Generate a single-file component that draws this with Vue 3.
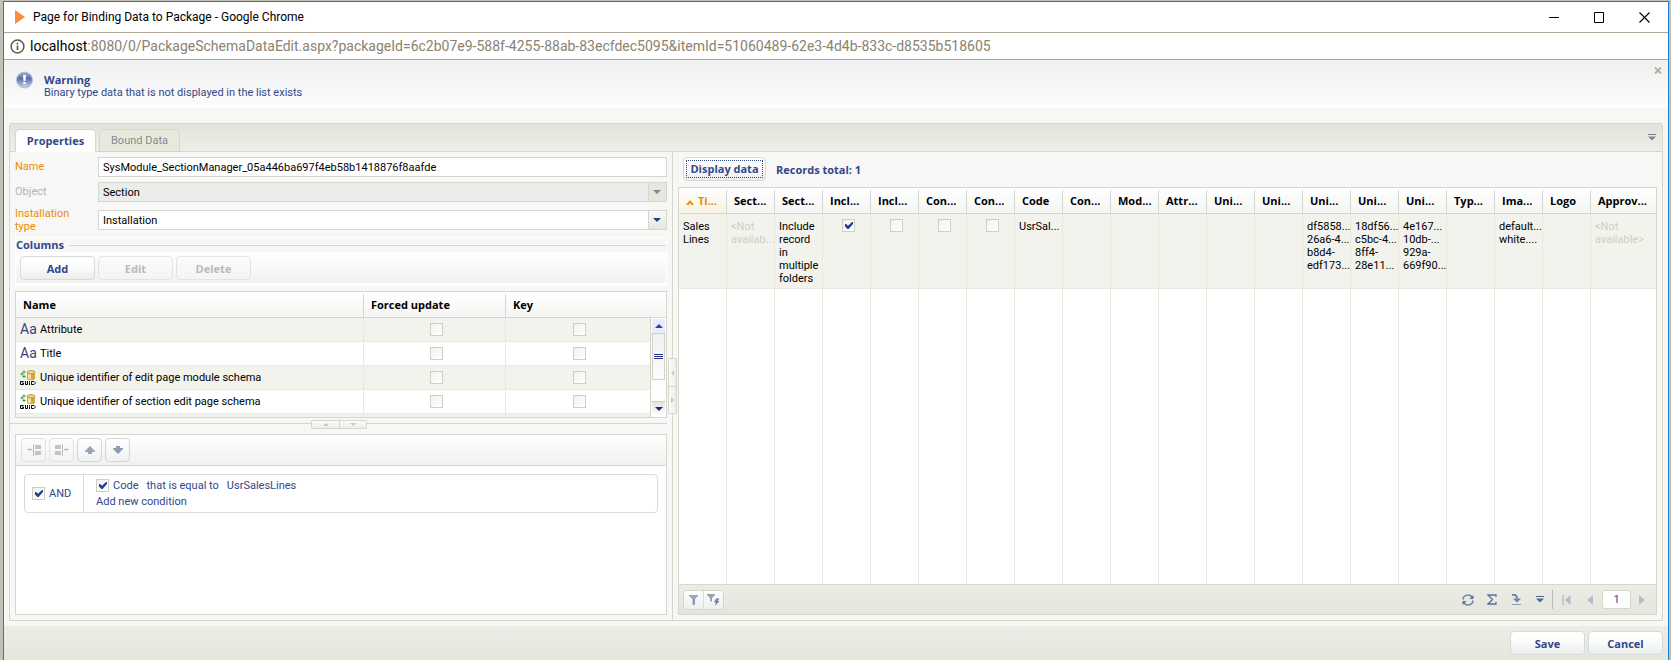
<template>
  <div class="desktop">
    <div class="window">
      <header class="title-bar">
        <svg class="app-icon" width="10" height="14" viewBox="0 0 10 14"><path d="M0 0L10 7L0 14Z" fill="#f98f3e" /></svg>
        <h1 class="window-title">Page for Binding Data to Package - Google Chrome</h1>
        <div class="window-buttons">
          <button type="button" aria-label="Minimize"><svg width="11" height="11" viewBox="0 0 11 11"><path d="M0 5.5H10" stroke="#000" /></svg></button>
          <button type="button" aria-label="Maximize"><svg width="11" height="11" viewBox="0 0 11 11"><path d="M.5 .5H9.5V10.5H.5Z" fill="none" stroke="#000" /></svg></button>
          <button type="button" aria-label="Close"><svg width="11" height="11" viewBox="0 0 11 11"><path d="M.5 .5L10.5 10.5M10.5 .5L.5 10.5" stroke="#000" stroke-width="1.1" /></svg></button>
        </div>
      </header>

      <div class="url-bar">
        <svg width="15" height="15" viewBox="0 0 15 15">
          <circle cx="7.5" cy="7.5" r="6.4" fill="none" stroke="#5b574c" stroke-width="1.5" />
          <path d="M7.5 6.5V11" stroke="#5b574c" stroke-width="1.7" />
          <circle cx="7.5" cy="4.5" r="1" fill="#5b574c" />
        </svg>
        <span class="url"><b>localhost</b>:8080/0/PackageSchemaDataEdit.aspx?packageId=6c2b07e9-588f-4255-88ab-83ecfdec5095&amp;itemId=51060489-62e3-4d4b-833c-d8535b518605</span>
      </div>

      <section class="warning">
        <svg width="17" height="18" viewBox="0 0 17 18">
          <defs>
            <linearGradient id="ball" x1="0" y1="0" x2="0" y2="1">
              <stop offset="0" stop-color="#9fb0d6" />
              <stop offset=".4" stop-color="#5b70aa" />
              <stop offset="1" stop-color="#cdd7ec" />
            </linearGradient>
          </defs>
          <circle cx="8.5" cy="9" r="8" fill="url(#ball)" stroke="#b9c3dc" />
          <path d="M7 4H10L9.4 10H7.6Z" fill="#fff" />
          <rect x="7.3" y="11" width="2.4" height="2.2" fill="#fff" />
        </svg>
        <div class="warning-text">
          <strong>Warning</strong>
          <p>Binary type data that is not displayed in the list exists</p>
        </div>
        <button type="button" class="warning-close" aria-label="Close warning">
          <svg width="8" height="7" viewBox="0 0 8 7"><path d="M1 .5L7 6.5M7 .5L1 6.5" stroke="#b5ad95" stroke-width="1.8" /></svg>
        </button>
      </section>

      <main class="tab-panel">
        <nav class="tabs">
          <button type="button" class="tab active">Properties</button>
          <button type="button" class="tab">Bound Data</button>
          <button type="button" class="tabs-menu" aria-label="Tabs">
            <svg width="8" height="7" viewBox="0 0 8 7"><path d="M0 .5H8" stroke="#7d838f" /><path d="M0 2.5H8L4 6.5Z" fill="#7d838f" /></svg>
          </button>
        </nav>

        <div class="panes">
          <div class="left-pane">
            <form class="props" @submit.prevent>
              <label for="name">Name</label>
              <input id="name" class="field" type="text" v-model="name">
              <label for="object" class="muted">Object</label>
              <div class="select-wrap disabled">
                <select id="object" class="field" disabled><option>Section</option></select>
                <span class="arrow"></span>
              </div>
              <label for="install" class="two-line">Installation type</label>
              <div class="select-wrap last">
                <select id="install" class="field"><option>Installation</option></select>
                <span class="arrow"></span>
              </div>
            </form>

            <section class="columns-group">
              <h2 class="group-title">Columns</h2>
              <div class="group-buttons">
                <button type="button" class="btn">Add</button>
                <button type="button" class="btn" disabled>Edit</button>
                <button type="button" class="btn" disabled>Delete</button>
              </div>
            </section>

            <div class="column-list">
              <table class="grid">
                <colgroup><col><col class="col-forced"><col class="col-key"></colgroup>
                <thead>
                  <tr><th>Name</th><th>Forced update</th><th>Key</th></tr>
                </thead>
                <tbody>
                  <tr v-for="c in columns" :key="c.name">
                    <td>
                      <div class="col-name">
                        <span v-if="c.type === 'text'" class="aa">Aa</span>
                        <svg v-else width="16" height="16" viewBox="0 0 16 16">
                          <path d="M2.500 2h3M4 .5v3M.5 4h3M2 2.500v3M2.500 6.500h3M4 5v3" stroke="#3f9a30" />
                          <path d="M7 2V8.500C7 10.700 15 10.700 15 8.500V2Z" fill="#cfa545" />
                          <path d="M8 3V8.800L11 9.600V3Z" fill="#f3e09a" />
                          <ellipse cx="11" cy="2.200" rx="4" ry="1.700" fill="#ecd488" stroke="#a98532" stroke-width=".7" />
                          <path d="M3.500 11.500H.5V14.500H3.500V13H2M5.500 11V14.500H7.500V11M9.500 11V12M9.500 12.500V15M11.500 11.500V14.500H14L15 13.500V12.500L14 11.500Z" fill="none" stroke="#000" />
                        </svg>
                        <span>{{ c.name }}</span>
                      </div>
                    </td>
                    <td class="check"><input type="checkbox" :aria-label="c.name + ' forced update'"></td>
                    <td class="check key"><input type="checkbox" :aria-label="c.name + ' key'"></td>
                  </tr>
                  <tr><td></td><td></td><td></td></tr>
                </tbody>
              </table>
              <div class="scrollbar">
                <button type="button" class="up" aria-label="Scroll up"></button>
                <div class="thumb"></div>
                <button type="button" class="down" aria-label="Scroll down"></button>
              </div>
            </div>

            <div class="h-splitter"><span class="h-handle"><i class="tri-up"></i><i class="tri-down"></i></span></div>

            <div class="filter-box">
              <div class="filter-tools">
                <button type="button" class="tool" disabled aria-label="Group">
                  <svg width="16" height="14" viewBox="0 0 16 14"><path d="M1 6.500H6M8.500 1.500H7.500V12.500H8.500" fill="none" stroke="#bcbcbc" /><path d="M3.500 4.500L6 6.500L3.500 8.500ZM9 2h6v4h-6zM9 8h6v4h-6z" fill="#c3c3c3" /></svg>
                </button>
                <button type="button" class="tool" disabled aria-label="Ungroup">
                  <svg width="16" height="14" viewBox="0 0 16 14"><path d="M15 6.500H10M7.500 1.500H8.500V12.500H7.500" fill="none" stroke="#bcbcbc" /><path d="M12.500 4.500L10 6.500L12.500 8.500ZM1 2h6v4h-6zM1 8h6v4h-6z" fill="#c3c3c3" /></svg>
                </button>
                <button type="button" class="tool" aria-label="Move up">
                  <svg width="10" height="8" viewBox="0 0 10 8"><path d="M5 0L10 5V6H7V8H3V6H0V5Z" fill="#9aa2b4" /></svg>
                </button>
                <button type="button" class="tool" aria-label="Move down">
                  <svg width="10" height="8" viewBox="0 0 10 8"><path d="M5 8L10 3V2H7V0H3V2H0V3Z" fill="#9099b0" /></svg>
                </button>
              </div>
              <div class="condition-group">
                <label class="and"><input type="checkbox" v-model="groupOn">AND</label>
                <div class="conditions">
                  <div class="condition">
                    <label><input type="checkbox" v-model="conditionOn">Code</label>
                    <a href="#">that is equal to</a>
                    <a href="#">UsrSalesLines</a>
                  </div>
                  <a href="#">Add new condition</a>
                </div>
              </div>
            </div>

            <span class="v-handle"><i class="tri-left"></i><i class="tri-right"></i></span>
          </div>

          <div class="right-pane">
            <div class="data-head">
              <button type="button" class="btn display"><span>Display data</span></button>
              <strong>Records total: 1</strong>
            </div>
            <div class="data-box">
              <table class="grid data">
                <colgroup><col v-for="n in 19" :key="n" class="col-data"><col></colgroup>
                <thead>
                  <tr>
                    <th v-for="(h, i) in headers" :key="i" :class="{ sorted: i === 0 }">
                      <svg v-if="i === 0" width="8" height="5" viewBox="0 0 8 5"><path d="M0 5L4 0L8 5H5.500L4 3L2.500 5Z" fill="#f08a00" /></svg>{{ h }}
                    </th>
                  </tr>
                </thead>
                <tbody>
                  <tr class="record">
                    <td v-for="(cell, i) in record" :key="i" :class="{ check: typeof cell === 'boolean', na: cell[0] === '<Not' }">
                      <input v-if="typeof cell === 'boolean'" type="checkbox" :checked="cell" :aria-label="headers[i]">
                      <template v-else>
                        <div v-for="line in cell" :key="line">{{ line }}</div>
                      </template>
                    </td>
                  </tr>
                  <tr class="filler"><td v-for="n in 20" :key="n"></td></tr>
                </tbody>
              </table>
              <div class="pager">
                <div class="filter-buttons">
                  <button type="button" aria-label="Filter">
                    <svg width="9" height="10" viewBox="0 0 9 10"><path d="M0 0H9V1L6 4V9L3.500 10V4L0 1Z" fill="#9aa4b8" /><path d="M5 4V10" stroke="#7e8aa6" /></svg>
                  </button>
                  <button type="button" aria-label="Quick filter">
                    <svg width="13" height="12" viewBox="0 0 13 12"><path d="M0 0H8V1L5 4V7L3 8V4L0 1Z" fill="#9aa4b8" /><path d="M9 4.500H12.500L10.500 7H12.500L8 12L9 8.500H7Z" fill="#6f7fa4" /></svg>
                  </button>
                </div>
                <div class="pager-right">
                  <button type="button" aria-label="Refresh">
                    <svg width="12" height="12" viewBox="0 0 12 12"><path d="M1 5.500C1.500 0 8.500 0 10 3.500M11 6.500C10.500 12 3.500 12 2 8.500" fill="none" stroke="#6f80a6" stroke-width="1.500" /><path d="M11.500 1V5H7.500ZM.5 11V7H4.500Z" fill="#5d6f97" /></svg>
                  </button>
                  <button type="button" aria-label="Totals">
                    <svg width="10" height="11" viewBox="0 0 10 11"><path d="M9 3V1H1L5.500 5.500L1 10H9V8" fill="none" stroke="#5d6f97" stroke-width="1.300" /></svg>
                  </button>
                  <button type="button" aria-label="Export">
                    <svg width="10" height="11" viewBox="0 0 10 11"><path d="M1 1C4 0 6 1.500 6 4.500" fill="none" stroke="#6f80a6" stroke-width="2" /><path d="M2 4.500H10L6 8.500Z" fill="#6f80a6" /><path d="M1 10.500H10" stroke="#8d9bb8" /></svg>
                  </button>
                  <button type="button" aria-label="More">
                    <svg width="8" height="7" viewBox="0 0 8 7"><path d="M0 .5H8" stroke="#4f6390" /><path d="M0 2.500H8L4 6.500Z" fill="#4f6390" /></svg>
                  </button>
                  <i class="sep"></i>
                  <button type="button" aria-label="First page">
                    <svg width="9" height="10" viewBox="0 0 9 10"><path d="M1 0V10" stroke="#b4bcc8" stroke-width="1.500" /><path d="M8.500 0V10L3 5Z" fill="#b4bcc8" /></svg>
                  </button>
                  <button type="button" aria-label="Previous page">
                    <svg width="6" height="10" viewBox="0 0 6 10"><path d="M6 0V10L0 5Z" fill="#b4bcc8" /></svg>
                  </button>
                  <input class="page-no" type="text" v-model="page" aria-label="Page">
                  <button type="button" class="next" aria-label="Next page">
                    <svg width="6" height="10" viewBox="0 0 6 10"><path d="M0 0V10L6 5Z" fill="#b4bcc8" /></svg>
                  </button>
                </div>
              </div>
            </div>
          </div>
        </div>
      </main>

      <footer class="footer">
        <button type="button" class="btn">Save</button>
        <button type="button" class="btn">Cancel</button>
      </footer>
    </div>
  </div>
</template>

<script setup>
import { ref } from 'vue';

const name = ref('SysModule_SectionManager_05a446ba697f4eb58b1418876f8aafde');
const groupOn = ref(true);
const conditionOn = ref(true);
const page = ref('1');

const columns = [
  { name: 'Attribute', type: 'text' },
  { name: 'Title', type: 'text' },
  { name: 'Unique identifier of edit page module schema', type: 'guid' },
  { name: 'Unique identifier of section edit page schema', type: 'guid' },
];

const headers = [
  'Ti...', 'Sect...', 'Sect...', 'Incl...', 'Incl...', 'Con...', 'Con...', 'Code', 'Con...', 'Mod...',
  'Attr...', 'Uni...', 'Uni...', 'Uni...', 'Uni...', 'Uni...', 'Typ...', 'Ima...', 'Logo', 'Approv...',
];

const record = [
  ['Sales', 'Lines'],
  ['<Not', 'availab...'],
  ['Include', 'record', 'in', 'multiple', 'folders'],
  true, false, false, false,
  ['UsrSal...'],
  [], [], [], [], [],
  ['df5858...', '26a6-4...', 'b8d4-', 'edf173...'],
  ['18df56...', 'c5bc-4...', '8ff4-', '28e11...'],
  ['4e167...', '10db-...', '929a-', '669f90...'],
  [],
  ['default...', 'white....'],
  [],
  ['<Not', 'available>'],
];
</script>

<style>
body { margin: 0; }
</style>

<style scoped>
* { box-sizing: border-box; }
.desktop { min-height: 100vh; display: flex; background: #c2c1b8; padding: 1px 2px 0 3px; font: 11px/13px Roboto, Tahoma, sans-serif; color: #000; }
.window { flex: 1; min-width: 0; display: flex; flex-direction: column; background: #f7f7f5; border: 1px solid #1c7fcf; border-bottom: 0; }
button { font: inherit; color: inherit; background: none; border: 0; padding: 0; display: inline-flex; align-items: center; justify-content: center; }
h1, h2, p { margin: 0; font-size: 11px; font-weight: normal; }
a { color: inherit; text-decoration: none; }
strong, th, .btn, .group-title, .tab.active { font-family: "Open Sans", Tahoma, sans-serif; font-weight: 700; }

/* browser chrome */
.title-bar { height: 31px; display: flex; align-items: center; padding: 0 18px 0 11px; background: #fff; border-bottom: 1px solid #aea797; }
.window-title { flex: 1; margin-left: 8px; font-size: 12px; line-height: 16px; }
.window-buttons { display: flex; gap: 34px; }
.url-bar { height: 27px; display: flex; align-items: center; gap: 5px; padding-left: 6px; background: #fff; border-bottom: 1px solid #aea797; }
.url { font-size: 14px; line-height: 20px; color: #8b8270; white-space: nowrap; }
.url b { font-weight: normal; color: #000; }

.warning { height: 48px; display: flex; padding: 11px 6px 0 12px; background: linear-gradient(#f0f0f0, #fdfdfd); color: #30478c; }
.warning-text { flex: 1; margin: 2px 0 0 11px; }
.warning-text strong { display: block; }
.warning-close { align-self: flex-start; margin-top: -4px; }

/* tabs */
.tab-panel { flex: 1; display: flex; flex-direction: column; margin: 15px 5px 5px; border: 1px solid #d5d6cc; border-radius: 2px 2px 0 0; }
.tabs { height: 28px; display: flex; align-items: flex-end; gap: 3px; padding: 0 6px 0 5px; background: linear-gradient(#e1e2d9, #e9e9e1 50%, #eeeeea); border-bottom: 1px solid #d5d6cc; }
.tab { height: 22px; width: 81px; border: 1px solid #d5d6cc; border-bottom: 0; border-radius: 5px 5px 0 0; background: #e7e9dd; color: #868a8e; }
.tab.active { height: 23px; margin-bottom: -1px; padding-bottom: 1px; background: #fff; color: #30478c; }
.tabs-menu { margin-left: auto; align-self: center; }

.panes { flex: 1; display: grid; grid-template-columns: minmax(663px, 40%) 1fr; }
.left-pane { position: relative; display: flex; flex-direction: column; min-width: 0; padding: 5px; border-right: 1px solid #d5d6cc; }

/* properties */
.props { display: grid; grid-template-columns: 83px 1fr; row-gap: 5px; color: #f08a00; }
.props label { padding-top: 3px; }
.props .muted { color: #b4b4ae; }
.props .two-line { padding: 0; width: 60px; }
.select-wrap { position: relative; }
.select-wrap.last { padding-top: 3px; }
.field { display: block; width: 100%; height: 20px; margin: 0; padding: 0 4px; border: 1px solid #d5d6cc; border-radius: 0; background: #fff; font: inherit; color: #000; appearance: none; opacity: 1; }
.disabled .field { background: #ececea; }
.arrow { position: absolute; right: 1px; top: 1px; width: 18px; height: 18px; border-left: 1px solid #d5d6cc; background: linear-gradient(#fafafa, #e4e6de); pointer-events: none; }
.disabled .arrow { background: #e6e6dc; }
.last .arrow { top: 4px; }
.arrow::after { content: ""; position: absolute; left: 4px; top: 7px; border: 4px solid transparent; border-top-color: #24408c; border-bottom: 0; }
.disabled .arrow::after { border-top-color: #83878b; }

.columns-group { margin-top: 4px; border: 1px solid #fff; border-width: 1px 1px 3px; }
.group-title { display: flex; align-items: center; gap: 5px; height: 14px; color: #30478c; line-height: 14px; }
.group-title::after { content: ""; flex: 1; height: 1px; background: #d5d6cc; }
.group-buttons { display: flex; gap: 3px; padding: 4px 4px 3px; background: linear-gradient(#fff, #f2f1ef); }
.btn { width: 75px; height: 24px; border: 1px solid #d6dad8; border-radius: 4px; background: linear-gradient(#fff, #fafbfb 50%, #eaedec); color: #30478c; }
.btn:disabled { color: #b9bab9; border-color: #e2e4e2; background: linear-gradient(#fbfbfb, #f3f4f3); }

/* tables */
.grid { width: 100%; table-layout: fixed; border-collapse: separate; border-spacing: 0; }
th { height: 26px; padding: 0 0 0 7px; text-align: left; white-space: nowrap; overflow: hidden; border-bottom: 1px solid #d5d6cc; background: linear-gradient(#d5d6cc, #d5d6cc) right bottom / 1px 23px no-repeat, linear-gradient(#fff, #f5f5f4); }
th:last-child { background: linear-gradient(#fff, #f5f5f4); }
td { border-right: 1px solid #ece8dc; border-bottom: 1px solid #e9e9dd; padding: 0; }
td:last-child { border-right: 0; }
input[type="checkbox"] { appearance: none; display: block; position: relative; width: 13px; height: 13px; margin: 0; border: 1px solid #cfcfc4; border-radius: 0; background: linear-gradient(135deg, #f1f1f0, #fff); flex: none; }
input[type="checkbox"]:checked::after { content: ""; position: absolute; left: 2px; top: 2px; width: 8px; height: 7px; background: #24408c; clip-path: polygon(0 30%, 15% 30%, 37% 55%, 88% 0, 100% 0, 100% 30%, 45% 100%, 30% 100%, 0 65%); }

.column-list { position: relative; height: 127px; margin-top: 5px; border: 1px solid #d5d6cc; overflow: hidden; background: #fff; }
.col-forced { width: 142px; }
.col-key { width: 160px; }
.column-list td { height: 24px; }
.column-list tbody tr:nth-child(odd) td, .record td { background: #f2f3ed; }
.column-list .check { padding-left: 66px; }
.column-list .key { padding-left: 67px; }
.col-name { display: flex; align-items: center; gap: 4px; padding-left: 4px; white-space: nowrap; }
.aa { width: 16px; font-size: 14px; color: #3c3c82; }
.scrollbar { position: absolute; top: 26px; right: 0; bottom: 0; width: 16px; display: flex; flex-direction: column; justify-content: space-between; background: #fdfdfd; border-left: 1px solid #d5d0c4; }
.scrollbar button { height: 16px; background: #eaecf8; border: 1px solid #fff; }
.scrollbar .up { border-bottom-color: #d5d0c4; }
.scrollbar .down { background: linear-gradient(#e2e4dc, #fff); border-top-color: #d5d0c4; }
.up::after { content: ""; border: 4px solid transparent; border-bottom-color: #3a34c8; border-top: 0; }
.down::after { content: ""; border: 4px solid transparent; border-top-color: #2d1d8c; border-bottom: 0; }
.thumb { height: 46px; margin: 0 1px auto; border: 1px solid #d5d0c4; border-top: 0; background: repeating-linear-gradient(#26308c 0 1px, transparent 1px 2px) center / 9px 5px no-repeat, linear-gradient(#eef0f2, #fafcfe); }

.h-splitter { position: relative; height: 16px; margin: 0 0 0 -5px; background: linear-gradient(#d5d6cc, #d5d6cc) 0 5px / 100% 1px no-repeat; }
.h-handle { position: absolute; left: 301px; top: 2px; width: 56px; height: 9px; display: grid; grid-template-columns: 1fr 1fr; place-items: center; border: 1px solid #d5d6cc; border-radius: 1px; background: linear-gradient(#d5d6cc, #d5d6cc) center / 1px 100% no-repeat, linear-gradient(#fcfcfc, #ececec); }
.tri-up { border: 3px solid transparent; border-bottom-color: #c9c9bd; border-top: 0; }
.tri-down { border: 3px solid transparent; border-top-color: #c9c9bd; border-bottom: 0; }
.v-handle { position: absolute; right: -5px; top: 206px; width: 9px; height: 56px; display: grid; grid-template-rows: 1fr 1fr; place-items: center; border: 1px solid #d5d6cc; border-radius: 1px; background: linear-gradient(#d5d6cc, #d5d6cc) center / 100% 1px no-repeat, linear-gradient(90deg, #fcfcfc, #ececec); z-index: 1; }
.tri-left { border: 3px solid transparent; border-right-color: #c9c9bd; border-left: 0; }
.tri-right { border: 3px solid transparent; border-left-color: #c9c9bd; border-right: 0; }

/* filter editor */
.filter-box { flex: 1; border: 1px solid #d5d6cc; background: #fff; color: #30478c; }
.filter-tools { height: 31px; display: flex; gap: 3px; padding: 3px 5px; border-bottom: 1px solid #d5d6cc; background: linear-gradient(#fff, #f2f1ef); }
.tool { width: 25px; height: 24px; border: 1px solid #d3d6d6; border-radius: 4px; background: linear-gradient(#fff, #f0f2f2); }
.tool:disabled { border-color: #e0e2e1; background: linear-gradient(#fcfcfc, #f3f3f3); }
.condition-group { display: flex; margin: 8px; border: 1px solid #dddcd2; border-radius: 4px; }
.and { display: flex; align-items: center; gap: 4px; width: 59px; padding-left: 7px; border-right: 1px solid #dddcd2; }
.conditions { padding: 4px 12px; }
.conditions > a { display: block; margin-top: 3px; }
.condition { display: flex; gap: 8px; }
.condition label { display: flex; gap: 4px; }

/* data grid */
.right-pane { display: flex; flex-direction: column; min-width: 0; padding: 5px; }
.data-head { display: flex; align-items: center; gap: 10px; height: 30px; padding: 0 5px 6px; color: #30478c; }
.display { width: 83px; padding: 2px; }
.display span { width: 100%; height: 18px; line-height: 16px; border: 1px dotted #30478c; }
.data-box { flex: 1; display: flex; flex-direction: column; border: 1px solid #d5d6cc; background: #fff; }
.data { flex: 1; }
.col-data { width: 48px; }
.data .sorted { color: #f08a00; background: linear-gradient(#d5d6cc, #d5d6cc) right bottom / 1px 23px no-repeat, linear-gradient(#fff, #f7f2e4); }
.sorted svg { margin-right: 4px; }
.data thead tr { height: 26px; }
.record { height: 75px; }
.record td { vertical-align: top; padding: 6px 0 0 4px; white-space: nowrap; overflow: hidden; }
.record .check { padding: 5px 0 0 19px; }
.record .na { color: #d2cdbd; }
.filler td { border-bottom: 0; }

.pager { height: 30px; display: flex; align-items: center; justify-content: space-between; padding: 0 4px; border-top: 1px solid #d5d6cc; background: linear-gradient(#ecece6, #e4e6dc); color: #30478c; }
.filter-buttons { display: flex; height: 20px; border: 1px solid #d5d6cc; border-radius: 3px; background: linear-gradient(#fdfdfd, #efefec); }
.filter-buttons button { width: 19px; }
.filter-buttons button + button { width: 20px; border-left: 1px solid #dddcd2; }
.pager-right { display: flex; align-items: center; }
.pager-right button { width: 24px; height: 20px; }
.sep { width: 1px; height: 19px; margin-right: 1px; background: #b9bbb6; }
.page-no { width: 29px; height: 19px; margin: 0; padding: 0; border: 1px solid #d5d6cc; border-radius: 3px; background: #fff; text-align: center; font: inherit; color: inherit; }
.pager-right .next { width: 21px; }

.footer { height: 34px; display: flex; justify-content: flex-end; gap: 3px; padding: 5px; background: linear-gradient(#edede7, #e5e7dd); }
</style>
